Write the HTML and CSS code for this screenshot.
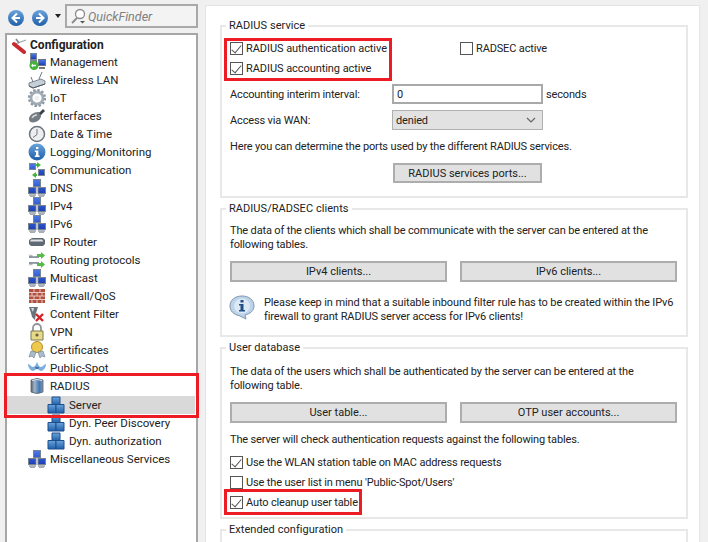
FILE: index.html
```html
<!DOCTYPE html>
<html lang="en">
<head>
<meta charset="utf-8">
<title>RADIUS server configuration</title>
<link rel="stylesheet" href="styles.css">
</head>
<body>
<svg class="defs" width="0" height="0" aria-hidden="true">
  <defs>
    <linearGradient id="blue" x1="0" y1="0" x2="0" y2="1"><stop offset="0" stop-color="#6aa4dc"/><stop offset="1" stop-color="#1f5ea8"/></linearGradient>
    <linearGradient id="scr" x1="0" y1="0" x2="0" y2="1"><stop offset="0" stop-color="#4a78e6"/><stop offset="1" stop-color="#1c3fb8"/></linearGradient>
    <linearGradient id="cyl" x1="0" y1="0" x2="1" y2="0"><stop offset="0" stop-color="#56616b"/><stop offset=".3" stop-color="#9fb4c8"/><stop offset=".7" stop-color="#3f78b8"/><stop offset="1" stop-color="#8a949d"/></linearGradient>
    <symbol id="i-net" viewBox="0 0 18 18">
      <path d="M5 0h8v8H5zM0 8h8.500v7H0zM9.500 8H18v7H9.500z" fill="#77838f"/>
      <path d="M6 1h6v6H6zM1 9h6.500v5H1zM10.500 9H17v5h-6.500z" fill="url(#scr)"/>
      <path d="M1 15.500h7v1H1zM10 15.500h7v1h-7z" fill="#6b7480"/>
      <path d="M2 16.500h5V18H2zM11 16.500h5V18h-5z" fill="#a4abb3"/>
    </symbol>
    <symbol id="i-mgmt" viewBox="0 0 18 18">
      <path d="M2 0h7v12H2z" fill="#7a8794"/><path d="M3 1h5v5H3z" fill="url(#scr)"/>
      <path d="M10 6h8v7h-8z" fill="#6b7480"/><path d="M11 7h6v5h-6z" fill="url(#scr)"/>
      <path d="M11 14h6v2h-6z" fill="#777"/>
      <circle cx="6" cy="12.500" r="4.500" fill="#44b33a"/>
      <path d="M3 12.500l2-2v1.300h3v1.400H5v1.300z" fill="#fff"/>
    </symbol>
    <symbol id="i-wlan" viewBox="0 0 18 18">
      <path d="M1 12l12-4 4 2v3L5 17l-4-2z" fill="#c6ced6" stroke="#65707c" stroke-width=".8"/>
      <path d="M11 8L14 1M5 11L3 6" stroke="#6e7883" fill="none"/>
      <path d="M1 15l4 2 12-4" fill="none" stroke="#4e5964"/>
    </symbol>
    <symbol id="i-gear" viewBox="0 0 18 18">
      <circle cx="9" cy="9" r="6" fill="none" stroke="#a2acb6" stroke-width="2.800"/>
      <circle cx="9" cy="9" r="8" fill="none" stroke="#8d98a3" stroke-width="2.200" stroke-dasharray="2.400 1.800"/>
      <circle cx="9" cy="9" r="2.500" fill="#eef1f3"/>
    </symbol>
    <symbol id="i-if" viewBox="0 0 18 18">
      <path d="M1 12c0-4 5-7 9-7s4 5 1 8-10 4-10-1z" fill="#737b83"/>
      <path d="M11 6l4-4 2 2-4 4z" fill="#3b4147"/>
      <path d="M4 11c1-2 3-3 5-3" fill="none" stroke="#d3d7da" stroke-width="1.500"/>
    </symbol>
    <symbol id="i-clock" viewBox="0 0 18 18">
      <circle cx="9" cy="9" r="7.500" fill="#eceef0" stroke="#6d757d" stroke-width="1.500"/>
      <path d="M9 9.500V4M9 9.500l-4 3" stroke="#6d757d" fill="none"/>
    </symbol>
    <symbol id="i-info" viewBox="0 0 18 18">
      <circle cx="9" cy="9" r="8.500" fill="url(#blue)"/>
      <path d="M8 4h2.400v2H8zM6.800 7.500h3.600v5h1.200V14H6.800v-1.500H8V9H6.800z" fill="#fff"/>
    </symbol>
    <symbol id="i-comm" viewBox="0 0 18 18">
      <path d="M1 2h7v7H1zM10 8h7v7h-7z" fill="#7b8794"/>
      <path d="M2 3h5v5H2zM11 9h5v5h-5z" fill="url(#scr)"/>
      <path d="M9 1l4 3-4 3V5H8V3h1z" fill="#45b53b"/>
      <path d="M8 17l-4-3 4-3v2h1v2H8z" fill="#45b53b"/>
    </symbol>
    <symbol id="i-router" viewBox="0 0 18 18">
      <path d="M1 7l3-2h11l2 2v4l-2 2H3l-2-2z" fill="#5f6972"/>
      <path d="M3 6.500h11l1.500 2H2z" fill="#dfe3e7"/>
    </symbol>
    <symbol id="i-routing" viewBox="0 0 18 18">
      <path d="M1 6h10M1 12h10" stroke="#8d97a1" stroke-width="2"/>
      <path d="M9 3h4V1l4 3.500L13 8V6H9z" fill="#57bb4a"/>
      <path d="M9 15h4v2l4-3.500L13 10v2H9z" fill="#57bb4a"/>
      <path d="M1 4c3 0 4 2 7 2M1 14c3 0 4-2 7-2" stroke="#a6afb7" fill="none"/>
    </symbol>
    <symbol id="i-wall" viewBox="0 0 18 18">
      <path d="M1 2h16v14H1z" fill="#b5503f"/>
      <path d="M1 5.500h16M1 9h16M1 12.500h16M6 2v3.500M12 2v3.500M4 5.500V9M9 5.500V9M14 5.500V9M6 9v3.500M12 9v3.500M4 12.500V16M9 12.500V16M14 12.500V16" stroke="#e6c9c1" fill="none"/>
    </symbol>
    <symbol id="i-filter" viewBox="0 0 18 18">
      <path d="M1 2h9l-2 6-1 7-3-3-1-4z" fill="#69737d"/>
      <path d="M3 3h3l-1 4z" fill="#d8dde1"/>
      <path d="M8 9l7 7M15 9l-7 7" stroke="#d4232a" stroke-width="2.400"/>
    </symbol>
    <symbol id="i-lock" viewBox="0 0 18 18">
      <path d="M5 8V5a4 4 0 0 1 8 0v3" fill="none" stroke="#8f969c" stroke-width="1.800"/>
      <path d="M3 8h12v9H3z" fill="#e7da86" stroke="#7f7a55"/>
      <circle cx="9" cy="12" r="1.600" fill="#66623f"/>
    </symbol>
    <symbol id="i-cert" viewBox="0 0 18 18">
      <circle cx="9" cy="6" r="5.500" fill="#efc94f" stroke="#b48f24"/>
      <path d="M3 10l-2 6 3-1 2 2 2-6zM15 10l2 6-3-1-2 2-2-6z" fill="#a9bccb" stroke="#6b7f90" stroke-width=".6"/>
    </symbol>
    <symbol id="i-spot" viewBox="0 0 18 18">
      <path d="M0 5c2 0 3 3 5 3s3-3 4-5c1 2 2 5 4 5s3-3 5-3c0 4-3 7-5 7-1 0-3-2-4-2s-3 2-4 2C3 12 0 9 0 5z" fill="#7eaedb"/>
      <path d="M7 8h4l-1 2H8z" fill="#3c6ea8"/>
    </symbol>
    <symbol id="i-radius" viewBox="0 0 18 18">
      <path d="M3 3q6-3 12 0v12q-6 3-12 0z" fill="url(#cyl)" stroke="#5a646d" stroke-width=".8"/>
      <path d="M4 3.500q5-2 10 0" fill="none" stroke="#dfe5ea"/>
    </symbol>
    <symbol id="i-cube" viewBox="0 0 18 18">
      <path d="M5 1h8v8H5z" fill="url(#blue)" stroke="#1d4f8f"/>
      <path d="M1 8.500h8V17H1z" fill="url(#blue)" stroke="#1d4f8f"/>
      <path d="M9 8.500h8V17H9z" fill="url(#blue)" stroke="#1d4f8f"/>
    </symbol>
    <symbol id="i-config" viewBox="0 0 16 18">
      <path d="M2 9l5-2 8-3" fill="none" stroke="#9aa3ab" stroke-width="1.200"/>
      <path d="M5 3l3 4" fill="none" stroke="#7c858d" stroke-width="1.500"/>
      <path d="M3 8l10 8" fill="none" stroke="#c92a2f" stroke-width="4" stroke-linecap="round"/>
    </symbol>
  </defs>
</svg>

<div class="app">
  <aside class="sidebar">
    <div class="toolbar">
      <button class="nav" aria-label="Back">
        <svg viewBox="0 0 16 16" width="16" height="16"><circle cx="8" cy="8" r="8" fill="url(#blue)"/><path d="M9 3.500L4.500 8 9 12.500M5 8h7" fill="none" stroke="#fff" stroke-width="2"/></svg>
      </button>
      <button class="nav" aria-label="Forward">
        <svg viewBox="0 0 16 16" width="16" height="16"><circle cx="8" cy="8" r="8" fill="url(#blue)"/><path d="M7 3.500L11.500 8 7 12.500M4 8h7" fill="none" stroke="#fff" stroke-width="2"/></svg>
      </button>
      <span class="caret"></span>
      <div class="finder">
        <svg viewBox="0 0 15 16" width="15" height="16"><circle cx="9" cy="6" r="4.500" fill="#fff" stroke="#8a8a8a" stroke-width="1.300"/><path d="M6 10l-5 5" stroke="#8a8a8a" stroke-width="1.800"/><path d="M9 13h5l-2.500 2.500z" fill="#555"/></svg>
        <span>QuickFinder</span>
      </div>
    </div>
    <nav class="tree">
      <div class="row root"><svg class="ic"><use href="#i-config"/></svg>Configuration</div>
      <div class="row"><svg class="ic"><use href="#i-mgmt"/></svg>Management</div>
      <div class="row"><svg class="ic"><use href="#i-wlan"/></svg>Wireless LAN</div>
      <div class="row"><svg class="ic"><use href="#i-gear"/></svg>IoT</div>
      <div class="row"><svg class="ic"><use href="#i-if"/></svg>Interfaces</div>
      <div class="row"><svg class="ic"><use href="#i-clock"/></svg>Date &amp; Time</div>
      <div class="row"><svg class="ic"><use href="#i-info"/></svg>Logging/Monitoring</div>
      <div class="row"><svg class="ic"><use href="#i-comm"/></svg>Communication</div>
      <div class="row"><svg class="ic"><use href="#i-net"/></svg>DNS</div>
      <div class="row"><svg class="ic"><use href="#i-net"/></svg>IPv4</div>
      <div class="row"><svg class="ic"><use href="#i-net"/></svg>IPv6</div>
      <div class="row"><svg class="ic"><use href="#i-router"/></svg>IP Router</div>
      <div class="row"><svg class="ic"><use href="#i-routing"/></svg>Routing protocols</div>
      <div class="row"><svg class="ic"><use href="#i-net"/></svg>Multicast</div>
      <div class="row"><svg class="ic"><use href="#i-wall"/></svg>Firewall/QoS</div>
      <div class="row"><svg class="ic"><use href="#i-filter"/></svg>Content Filter</div>
      <div class="row"><svg class="ic"><use href="#i-lock"/></svg>VPN</div>
      <div class="row"><svg class="ic"><use href="#i-cert"/></svg>Certificates</div>
      <div class="row"><svg class="ic"><use href="#i-spot"/></svg>Public-Spot</div>
      <div class="tree-mark">
        <div class="row"><svg class="ic"><use href="#i-radius"/></svg>RADIUS</div>
        <div class="row sub selected"><svg class="ic"><use href="#i-cube"/></svg>Server</div>
      </div>
      <div class="row sub"><svg class="ic"><use href="#i-cube"/></svg>Dyn. Peer Discovery</div>
      <div class="row sub"><svg class="ic"><use href="#i-cube"/></svg>Dyn. authorization</div>
      <div class="row"><svg class="ic"><use href="#i-net"/></svg>Miscellaneous Services</div>
    </nav>
  </aside>

  <main class="panel">
    <fieldset class="group first">
      <legend>RADIUS service</legend>
      <div class="top-row">
        <div class="mark checks-mark">
          <label class="check"><input type="checkbox" checked>RADIUS authentication active</label>
          <label class="check"><input type="checkbox" checked>RADIUS accounting active</label>
        </div>
        <label class="check"><input type="checkbox">RADSEC active</label>
      </div>
      <div class="form">
        <label>Accounting interim interval:</label>
        <div class="field"><input class="text" type="text" value="0"><span>seconds</span></div>
        <label>Access via WAN:</label>
        <div class="select">denied
          <svg viewBox="0 0 10 6" width="10" height="6"><path d="M1 1l4 4 4-4" fill="none" stroke="#666" stroke-width="1.200"/></svg>
        </div>
      </div>
      <p class="ports">Here you can determine the ports used by the different RADIUS services.</p>
      <div class="center"><button class="btn ports-btn">RADIUS services ports...</button></div>
    </fieldset>

    <fieldset class="group">
      <legend>RADIUS/RADSEC clients</legend>
      <p class="intro">The data of the clients which shall be communicate with the server can be entered at the following tables.</p>
      <div class="btns">
        <button class="btn">IPv4 clients...</button>
        <button class="btn">IPv6 clients...</button>
      </div>
      <div class="note">
        <svg viewBox="0 0 26 25" width="26" height="25"><path d="M13 1C6 1 1 5 1 11c0 5 4 9 9 9.500L17 24l-1-4c5-1 9-4.500 9-9C25 5 20 1 13 1z" fill="#bcd3ea" stroke="#7f96ad"/><ellipse cx="13" cy="11" rx="8" ry="7.500" fill="#dce9f5"/><path d="M11.500 5h3v2.500h-3zM10 9h4.500v6H16v1.500h-6V15h1.500v-4.500H10z" fill="#1e4f86"/></svg>
        <p>Please keep in mind that a suitable inbound filter rule has to be created within the IPv6 firewall to grant RADIUS server access for IPv6 clients!</p>
      </div>
    </fieldset>

    <fieldset class="group users">
      <legend>User database</legend>
      <p class="intro">The data of the users which shall be authenticated by the server can be entered at the following table.</p>
      <div class="btns">
        <button class="btn">User table...</button>
        <button class="btn">OTP user accounts...</button>
      </div>
      <p class="check-intro">The server will check authentication requests against the following tables.</p>
      <div class="user-checks">
        <label class="check"><input type="checkbox" checked>Use the WLAN station table on MAC address requests</label>
        <label class="check"><input type="checkbox">Use the user list in menu 'Public-Spot/Users'</label>
        <div class="mark cleanup-mark">
          <label class="check"><input type="checkbox" checked>Auto cleanup user table</label>
        </div>
      </div>
    </fieldset>

    <fieldset class="group last">
      <legend>Extended configuration</legend>
    </fieldset>
  </main>
</div>
</body>
</html>
```

FILE: styles.css
```css
* { box-sizing: border-box; }

html, body {
  margin: 0;
  height: 542px;
  overflow: hidden;
  background: #f0f0f0;
}

body, button, input {
  font-family: Roboto, "Liberation Sans", sans-serif;
  font-size: 11px;
  letter-spacing: -.15px;
  color: #222;
}

.defs { position: absolute; }

.app {
  display: flex;
  height: 542px;
  overflow: hidden;
}

/* Left column */
.sidebar {
  flex: none;
  width: 205px;
  height: 560px;
  padding: 4px 7px 0 5px;
  display: flex;
  flex-direction: column;
  gap: 5px;
}

.toolbar {
  display: flex;
  align-items: center;
  height: 24px;
}

.nav {
  border: 0;
  padding: 0;
  background: none;
  display: flex;
  width: 16px;
  height: 16px;
  margin: 4px 8px 0 3px;
}

.nav + .nav { margin-left: 0; margin-right: 0; }

.caret {
  margin: 0 4px 0 7px;
  border: 3.500px solid transparent;
  border-top: 4px solid #222;
  border-bottom: 0;
}

.finder {
  flex: 1;
  height: 24px;
  padding-left: 4px;
  display: flex;
  align-items: center;
  gap: 2px;
  border: 2px solid #a9a9a9;
  background: #f3f3f3;
  color: #808080;
  font-style: italic;
  font-size: 12.500px;
  letter-spacing: 0;
}

.tree {
  flex: 1;
  border: 2px solid #a6a6a6;
  background: #fff;
  font-size: 11.500px;
  letter-spacing: 0;
}

.row {
  display: flex;
  align-items: center;
  gap: 4px;
  height: 18px;
  padding: 0 0 0 21px;
  white-space: nowrap;
}

.ic { width: 18px; height: 18px; flex: none; }

.root {
  padding: 1px 0 0 4px;
  gap: 3px;
  font-size: 12px;
  font-weight: 700;
}

.root .ic { width: 16px; }

.row.sub { padding-left: 40px; }

.selected {
  margin: 1px 1px 0 0;
  background: #d9d9d9;
}

.tree-mark { position: relative; }

.tree-mark::after,
.mark::after {
  content: "";
  position: absolute;
  border: 3px solid #ed1c24;
  pointer-events: none;
}

.tree-mark::after { inset: -4px -3px -4px -3px; }

/* Right panel */
.panel {
  flex: none;
  width: 495px;
  height: 560px;
  margin-top: 5px;
  padding: 13px 11px 0 14px;
  background: #fff;
  border: 1px solid #e4e4e4;
  display: flex;
  flex-direction: column;
  gap: 4px;
}

.group {
  margin: 0;
  padding: 0 9px 0 8px;
  min-width: 0;
  border: 2px solid #e8e8e8;
}

.group legend {
  margin-left: -4px;
  padding: 0 3px;
  line-height: 14px;
  letter-spacing: .05px;
}

.group p { margin: 0; line-height: 14px; }

.first { padding-bottom: 13px; }

.last { min-height: 40px; }

.top-row {
  display: flex;
  margin-top: 5px;
}

.mark { position: relative; }

.checks-mark { width: 230px; }

.checks-mark .check { letter-spacing: -.06px; }

.checks-mark::after { inset: 0 68px -3px -6px; }

.check {
  display: flex;
  align-items: center;
  gap: 3px;
  height: 20px;
  white-space: nowrap;
}

.check input {
  appearance: none;
  flex: none;
  width: 13px;
  height: 13px;
  margin: 0;
  border: 1px solid #555;
  background: #fff;
  position: relative;
}

.check input:checked::before {
  content: "";
  position: absolute;
  left: 3px;
  top: 0;
  width: 4px;
  height: 9px;
  border: solid #555;
  border-width: 0 1.500px 1.500px 0;
  transform: rotate(40deg);
}

.form {
  display: grid;
  grid-template-columns: 162px 151px;
  align-items: center;
  row-gap: 6px;
  margin-top: 6px;
}

.field { display: flex; align-items: center; }

.field span { margin-left: 3px; }

.text {
  flex: none;
  width: 151px;
  height: 20px;
  padding: 0 3px;
  border: 2px solid #a9a9a9;
  background: #fff;
  outline: 0;
}

.select {
  display: flex;
  align-items: center;
  justify-content: space-between;
  height: 20px;
  padding: 0 6px 0 3px;
  border: 1px solid #b0b0b0;
  background: #e2e2e2;
}

.group .ports { margin-top: 10px; }

.center { display: flex; padding-left: 163px; margin-top: 9px; }

.btn {
  height: 21px;
  padding: 0;
  border: 2px solid #adadad;
  background: #e1e1e1;
  letter-spacing: 0;
}

.btn.ports-btn { width: 149px; height: 20px; }

.group .intro { margin-top: 8px; }

.group.users .intro { margin-top: 10px; }

.btns {
  display: grid;
  grid-template-columns: 217px 217px;
  gap: 13px;
  margin-top: 9px;
}

.note {
  display: flex;
  gap: 9px;
  margin: 13px 0 11px -1px;
}

.note svg { flex: none; }

.note p { padding-top: 1px; letter-spacing: -.12px; }

.group .check-intro { margin-top: 10px; }

.user-checks { margin-top: 5px; padding-bottom: 5px; }

.cleanup-mark::after { inset: -3px 315px -3px -6px; }
```
